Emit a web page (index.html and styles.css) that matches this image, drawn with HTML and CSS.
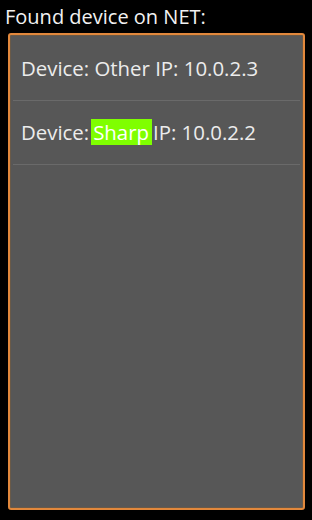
FILE: index.html
```html
<!DOCTYPE html>
<html lang="en">
<head>
    <meta charset="UTF-8">
    <meta name="viewport" content="width=device-width, initial-scale=1.0">
    <title>Found device</title>
    <link rel="stylesheet" href="styles.css">
</head>
<body>
    <div class="screen">
        <div class="title">Found device on NET:</div>
        <div class="panel">
            <ul class="device-list">
                <li class="device">Device: Other IP: 10.0.2.3</li>
                <li class="device">Device:<span class="match">Sharp</span>IP: 10.0.2.2</li>
            </ul>
        </div>
    </div>
</body>
</html>
```
FILE: styles.css
```css
html, body {
    margin: 0;
    padding: 0;
    background-color: #000000;
}

.screen {
    width: 312px;
    height: 520px;
    display: flex;
    flex-direction: column;
    font-family: 'Open Sans', 'DejaVu Sans', sans-serif;
    color: #ececec;
}

.title {
    font-size: 20px;
    line-height: 33px;
    height: 33px;
    padding-left: 5px;
    color: #f2f2f2;
}

.panel {
    flex: 1;
    margin: 0 7px 10px 8px;
    border: 2px solid #e2883c;
    border-radius: 3px;
    background-color: #575757;
    box-shadow: inset 0 0 0 1px #6a5a48;
}

.device-list {
    list-style: none;
    margin: 0;
    padding: 2px 3px 0 3px;
}

.device {
    height: 63px;
    line-height: 63px;
    padding-left: 8px;
    font-size: 20.4px;
    border-bottom: 1px solid #6a6a6a;
    white-space: nowrap;
}

.match {
    display: inline-block;
    line-height: 26px;
    margin: 0 1px 0 2px;
    padding: 0 3px 0 2px;
    background-color: #7fff00;
    color: #ffffff;
}
```
